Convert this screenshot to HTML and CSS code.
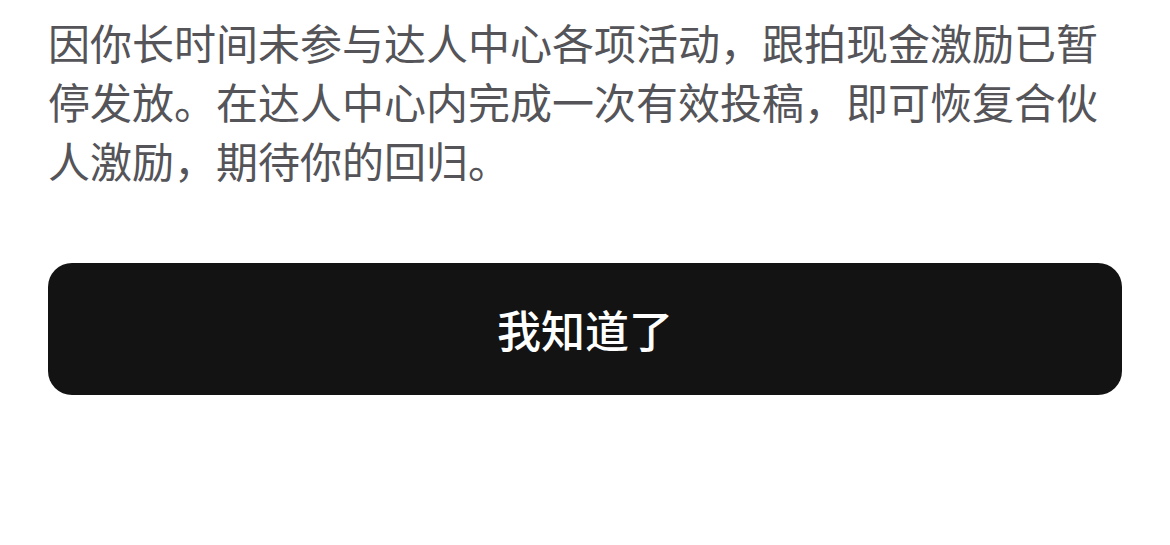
FILE: index.html
```
<!DOCTYPE html>
<html lang="zh">
<head>
<meta charset="utf-8">
<link rel="stylesheet" href="styles.css">
</head>
<body>
<div class="sheet">
  <p class="msg">因你长时间未参与达人中心各项活动，跟拍现金激励已暂停发放。在达人中心内完成一次有效投稿，即可恢复合伙人激励，期待你的回归。</p>
  <button class="ok">我知道了</button>
</div>
</body>
</html>
```
FILE: styles.css
```
html, body { margin: 0; padding: 0; background: #fff; }
.sheet {
  width: 1170px;
  height: 545px;
  box-sizing: border-box;
  padding: 12px 48px 0 48px;
  font-family: "Noto Sans CJK SC", "Noto Sans", sans-serif;
}
.msg {
  margin: 0;
  font-size: 42px;
  line-height: 59px;
  color: #545459;
  width: 1060px;
}
.ok {
  display: flex;
  align-items: center;
  justify-content: center;
  margin-top: 74px;
  width: 1074px;
  height: 132px;
  border: none;
  border-radius: 24px;
  background: #131313;
  color: #fff;
  font-family: "Noto Sans CJK SC", "Noto Sans", sans-serif;
  font-size: 44px;
  font-weight: 500;
  padding: 0;
}
```
